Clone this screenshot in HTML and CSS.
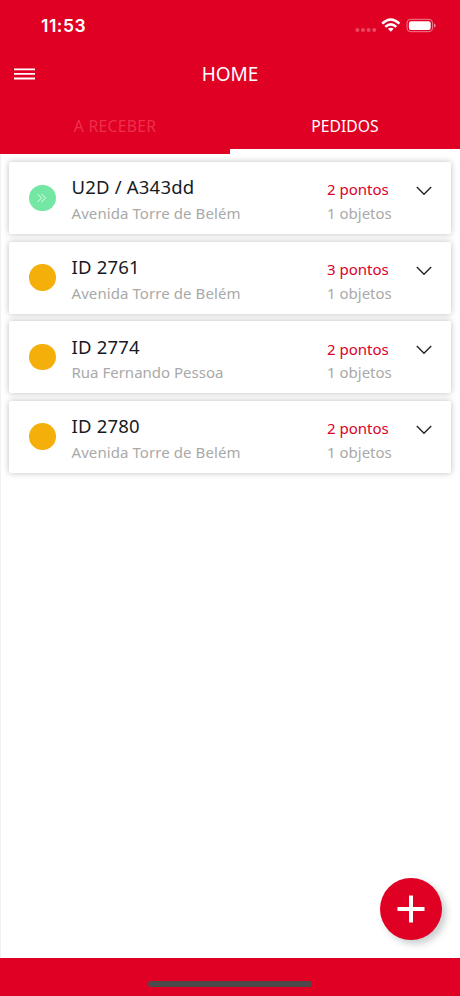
FILE: index.html
```html
<!DOCTYPE html>
<html lang="pt">
<head>
<meta charset="utf-8">
<title>Home</title>
<link rel="stylesheet" href="styles.css">
</head>
<body>
<div class="app">
  <div class="status">
    <span class="time">11:53</span>
    <svg class="status-icons" width="82" height="20" viewBox="0 0 82 20">
      <g fill="#fff" opacity=".28"><circle cx="3.400" cy="14" r="2"/><circle cx="9" cy="14" r="2"/><circle cx="14.600" cy="14" r="2"/><circle cx="20.200" cy="14" r="2"/></g>
      <g fill="none" stroke="#fff" stroke-width="2.600"><path d="M28.200 7.600Q36.800-.6 45.400 7.600"/><path d="M31.300 10.900Q36.800 5.800 42.300 10.900"/></g>
      <path fill="#fff" d="M36.800 15.800l-2.900-3q2.900-2.300 5.800 0z"/>
      <rect x="53" y="3.300" width="25.600" height="12.400" rx="3.800" fill="none" stroke="#fff" opacity=".5"/>
      <rect x="54.900" y="5.200" width="21.800" height="8.800" rx="2.200" fill="#fff"/>
      <path d="M80 7.300q1.700.8 1.700 2.200T80 11.700z" fill="#fff" opacity=".5"/>
    </svg>
  </div>
  <header class="bar">
    <svg class="menu" width="21" height="12" viewBox="0 0 21 12" stroke="#fff" stroke-width="1.800"><path d="M0 1.300h21M0 5.900h21M0 10.500h21"/></svg>
    <h1 class="title">HOME</h1>
  </header>
  <nav class="tabs">
    <div class="tab idle"><span>A RECEBER</span></div>
    <div class="tab active"><span>PEDIDOS</span></div>
  </nav>
  <main class="list">
    <article class="card">
      <span class="dot green"><svg width="12" height="12" viewBox="0 0 12 12" fill="none" stroke="#fff" stroke-width="1" opacity=".8"><path d="M1.500 2L5.500 6l-4 4M5.500 2l4 4-4 4"/></svg></span>
      <div class="info"><div class="name">U2D / A343dd</div><div class="street">Avenida Torre de Belém</div></div>
      <div class="counts"><div class="points">2 pontos</div><div class="objects">1 objetos</div></div>
      <svg class="chevron" width="16" height="10" viewBox="0 0 16 10"><path d="M.8 1L8 8.200 15.200 1"/></svg>
    </article>
    <article class="card">
      <span class="dot"></span>
      <div class="info"><div class="name">ID 2761</div><div class="street">Avenida Torre de Belém</div></div>
      <div class="counts"><div class="points">3 pontos</div><div class="objects">1 objetos</div></div>
      <svg class="chevron" width="16" height="10" viewBox="0 0 16 10"><path d="M.8 1L8 8.200 15.200 1"/></svg>
    </article>
    <article class="card">
      <span class="dot"></span>
      <div class="info"><div class="name">ID 2774</div><div class="street rua">Rua Fernando Pessoa</div></div>
      <div class="counts"><div class="points">2 pontos</div><div class="objects">1 objetos</div></div>
      <svg class="chevron" width="16" height="10" viewBox="0 0 16 10"><path d="M.8 1L8 8.200 15.200 1"/></svg>
    </article>
    <article class="card">
      <span class="dot"></span>
      <div class="info"><div class="name">ID 2780</div><div class="street">Avenida Torre de Belém</div></div>
      <div class="counts"><div class="points">2 pontos</div><div class="objects">1 objetos</div></div>
      <svg class="chevron" width="16" height="10" viewBox="0 0 16 10"><path d="M.8 1L8 8.200 15.200 1"/></svg>
    </article>
  </main>
  <button class="fab" aria-label="Adicionar"><svg width="28" height="28" viewBox="0 0 28 28" stroke="#fff" stroke-width="4"><path d="M14 .5v27M.5 14h27"/></svg></button>
  <footer class="footer"><span class="home-line"></span></footer>
</div>
</body>
</html>
```
FILE: styles.css
```css
* { box-sizing: border-box; }
body { margin: 0; background: #fff; font-family: "Noto Sans", sans-serif; font-weight: 400; }
svg { display: block; flex: none; }
.app { position: relative; width: 460px; height: 996px; display: flex; flex-direction: column; overflow: hidden; }
.status { height: 50px; background: #e00024; display: flex; justify-content: space-between; padding: 16px 24px 0 41px; flex: none; }
.time { font: 600 17.500px/20px Inter, sans-serif; letter-spacing: .5px; color: #fff; }
.bar { height: 50px; background: #e00024; display: grid; grid-template-columns: 100px 1fr 100px; align-items: center; flex: none; }
.menu { margin: -3px 0 0 14px; }
.title { margin: -3px 0 0; text-align: center; color: #fff; font-size: 19px; font-weight: 400; line-height: 24px; }
.tabs { height: 53.500px; display: flex; flex: none; }
.tab { flex: 1; text-align: center; font-size: 15.700px; line-height: 20px; padding-top: 16px; background: #e00024; color: #fff; }
.idle { color: #ee2f4b; letter-spacing: .3px; }
.active { border-bottom: 5px solid #fff; }
.list { flex: 1; display: flex; flex-direction: column; gap: 7.600px; padding: 8.500px 9px 0 8px; border-left: 1px solid #f1f1f1; }
.card { height: 72px; flex: none; background: #fff; border-radius: 2px; box-shadow: 0 0 6px rgba(0,0,0,.26); display: grid; grid-template-columns: 62.500px 255.500px 90px 1fr; align-items: start; }
.dot { width: 26.500px; height: 26.500px; border-radius: 50%; background: #f4af0b; margin: 22.500px 0 0 20px; display: flex; align-items: center; justify-content: center; }
.green { background: #73e7a3; }
.info, .counts { white-space: nowrap; }
.name { margin-top: 12.400px; font-size: 18.500px; letter-spacing: .2px; line-height: 25px; color: #171b22; }
.street, .objects { font-size: 15px; line-height: 22px; color: #a9a9a9; margin-top: 2.600px; }
.street { letter-spacing: .08px; }
.rua { letter-spacing: 0; }
.points { margin-top: 16.400px; font-size: 15px; line-height: 22px; color: #dc0028; }
.counts .objects { margin-top: 1.600px; }
.chevron { margin: 24px 0 0 -1px; fill: none; stroke: #252525; stroke-width: 1.400; }
.fab { position: absolute; left: 380px; top: 878px; width: 62px; height: 62px; border: 0; border-radius: 50%; background: #e00024; display: flex; align-items: center; justify-content: center; padding: 0; box-shadow: 4px 4px 7px rgba(60,80,80,.28); }
.footer { height: 38px; flex: none; background: #e00024; display: flex; justify-content: center; padding-top: 23px; }
.home-line { width: 164px; height: 6px; border-radius: 3px; background: #4e4a4b; }
```
